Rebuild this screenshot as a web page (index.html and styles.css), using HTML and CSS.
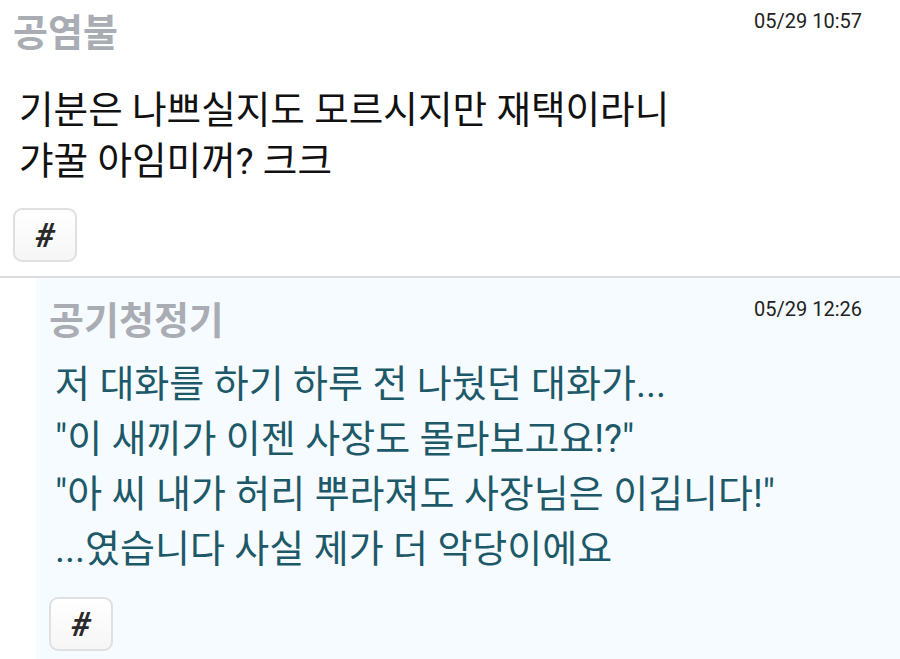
FILE: index.html
```html
<!DOCTYPE html>
<html lang="ko">
<head>
<meta charset="utf-8">
<link rel="stylesheet" href="styles.css">
</head>
<body>
<div class="thread">
  <article class="post">
    <header class="post-head">
      <span class="author">공염불</span>
      <time class="stamp">05/29 10:57</time>
    </header>
    <p class="body">기분은 나쁘실지도 모르시지만 재택이라니<br>갸꿀 아임미꺼? 크크</p>
    <button class="tag">#</button>
  </article>
  <div class="divider"></div>
  <article class="post reply">
    <header class="post-head">
      <span class="author">공기청정기</span>
      <time class="stamp">05/29 12:26</time>
    </header>
    <p class="body reply-body">저 대화를 하기 하루 전 나눴던 대화가...<br>"이 새끼가 이젠 사장도 몰라보고요!?"<br>"아 씨 내가 허리 뿌라져도 사장님은 이깁니다!"<br>...였습니다 사실 제가 더 악당이에요</p>
    <button class="tag">#</button>
  </article>
</div>
</body>
</html>
```
FILE: styles.css
```css
html, body {
  margin: 0;
  padding: 0;
  background: #ffffff;
}
body {
  font-family: Roboto, "Noto Sans CJK KR", sans-serif;
  width: 900px;
  height: 659px;
  overflow: hidden;
}
.thread {
  display: flex;
  flex-direction: column;
}
.post {
  padding: 8px 38px 14px 13px;
  display: flex;
  flex-direction: column;
  align-items: flex-start;
}
.post-head {
  align-self: stretch;
  display: flex;
  justify-content: space-between;
  align-items: flex-start;
}
.author {
  font-family: "Noto Sans CJK KR", sans-serif;
  font-weight: 700;
  font-size: 38px;
  line-height: 44px;
  color: #a9adb3;
}
.stamp {
  font-size: 20px;
  line-height: 22px;
  margin-top: 2px;
  color: #222;
}
.body {
  margin: 33px 0 0 6px;
  font-size: 37.6px;
  line-height: 51px;
  color: #111;
}
.tag {
  margin-top: 21px;
  width: 64px;
  height: 54px;
  border: 2px solid #e0e0e0;
  border-radius: 9px;
  background: linear-gradient(#ffffff, #f6f6f6);
  font-family: Roboto, sans-serif;
  font-size: 34px;
  font-weight: 700;
  font-style: italic;
  line-height: 1;
  color: #2a2a2a;
  padding: 0;
}
.divider {
  height: 2px;
  background: #dcdcdc;
}
.reply {
  margin-left: 36px;
  background: #f5fbfe;
  padding-top: 18px;
  padding-bottom: 20px;
}
.reply-body {
  margin-top: 17px;
  font-size: 38px;
  line-height: 55px;
  color: #1d5968;
}
.reply .tag {
  margin-top: 20px;
}
```
